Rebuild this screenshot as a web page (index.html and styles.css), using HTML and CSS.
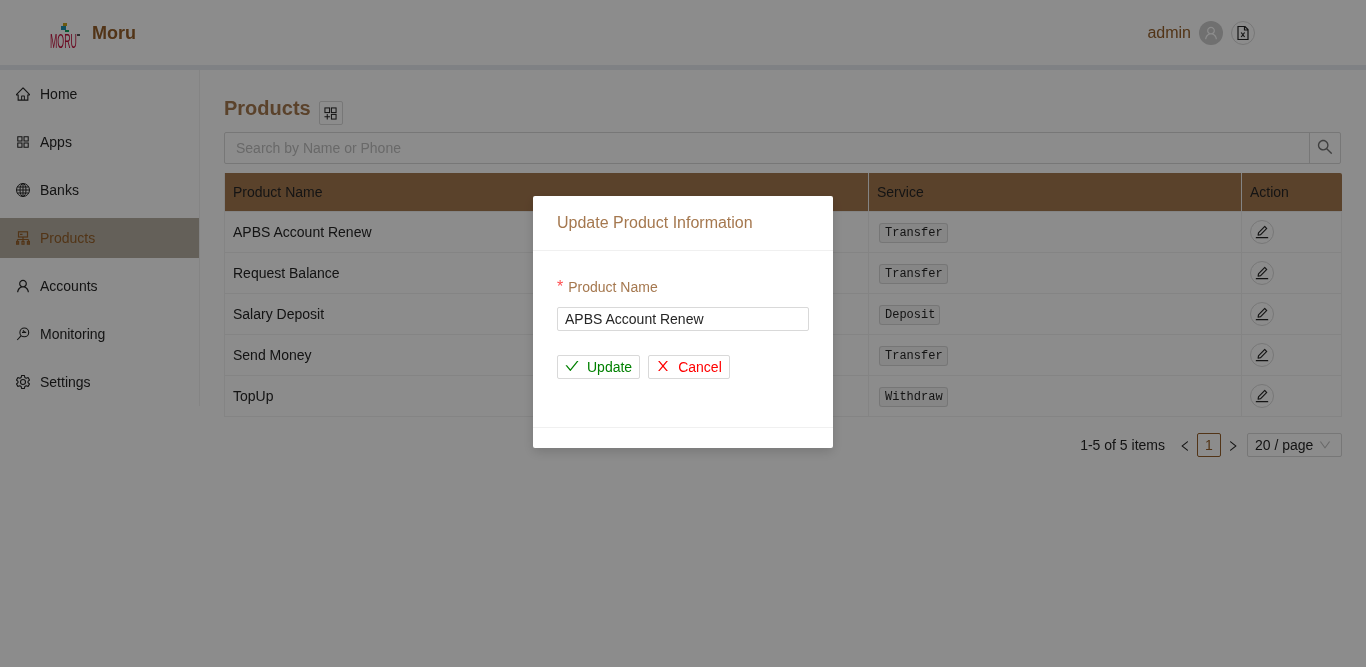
FILE: index.html
```html
<!DOCTYPE html>
<html lang="en">
<head>
    <meta charset="UTF-8">
    <meta name="viewport" content="width=device-width, initial-scale=1.0">
    <title>Moru - Products</title>
    <link rel="stylesheet" href="styles.css">
</head>
<body>
    <svg class="sprite" xmlns="http://www.w3.org/2000/svg">
        <symbol id="i-home" viewBox="64 64 896 896"><path d="M946.5 505L560.1 118.8l-25.9-25.9a31.5 31.5 0 0 0-44.4 0L77.5 505a63.9 63.9 0 0 0-18.8 46c.4 35.2 29.7 63.3 64.9 63.3h42.5V940h691.8V614.3h43.4c17.1 0 33.2-6.7 45.3-18.8a63.6 63.6 0 0 0 18.7-45.3c0-17-6.7-33.1-18.8-45.2zM568 868H456V664h112v204zm217.9-325.7V868H632V640c0-22.1-17.9-40-40-40H432c-22.1 0-40 17.9-40 40v228H238.1V542.3h-96l370-369.7 23.1 23.1L882 542.3h-96.1z"/></symbol>
        <symbol id="i-apps" viewBox="64 64 896 896"><path d="M464 144H160c-8.8 0-16 7.2-16 16v304c0 8.8 7.2 16 16 16h304c8.8 0 16-7.2 16-16V160c0-8.8-7.2-16-16-16zm-52 268H212V212h200v200zm452-268H560c-8.8 0-16 7.2-16 16v304c0 8.8 7.2 16 16 16h304c8.8 0 16-7.2 16-16V160c0-8.8-7.2-16-16-16zm-52 268H612V212h200v200zM464 544H160c-8.8 0-16 7.2-16 16v304c0 8.8 7.2 16 16 16h304c8.8 0 16-7.2 16-16V560c0-8.8-7.2-16-16-16zm-52 268H212V612h200v200zm452-268H560c-8.8 0-16 7.2-16 16v304c0 8.8 7.2 16 16 16h304c8.8 0 16-7.2 16-16V560c0-8.8-7.2-16-16-16zm-52 268H612V612h200v200z"/></symbol>
        <symbol id="i-globe" viewBox="1 1 14 14"><g fill="none" stroke="currentColor" stroke-width="1"><circle cx="8" cy="8" r="6.5"/><ellipse cx="8" cy="8" rx="3" ry="6.5"/><path d="M8 1.5v13M2.2 5h11.6M2.2 11h11.6M1.5 8h13"/></g></symbol>
        <symbol id="i-cluster" viewBox="1 1 14 14"><g fill="none" stroke="currentColor" stroke-width="1.2"><rect x="3.5" y="1.8" width="9" height="5.2"/><path d="M5 4.4h2.5M8 7v2.5M2.5 9.5h11M2.5 9.5v2M8 9.5v2M13.5 9.5v2"/><rect x="1.6" y="11.5" width="2" height="2.7"/><rect x="7" y="11.5" width="2" height="2.7"/><rect x="12.4" y="11.5" width="2" height="2.7"/></g></symbol>
        <symbol id="i-user" viewBox="64 64 896 896"><path d="M858.5 763.6a374 374 0 0 0-80.6-119.5 375.63 375.63 0 0 0-119.5-80.6c-.4-.2-.8-.3-1.2-.5C719.5 518 760 444.7 760 362c0-137-111-248-248-248S264 225 264 362c0 82.7 40.5 156 102.8 201.1-.4.2-.8.3-1.2.5-44.8 18.9-85 46-119.5 80.6a375.63 375.63 0 0 0-80.6 119.5A371.7 371.7 0 0 0 136 901.8a8 8 0 0 0 8 8.2h60c4.4 0 7.9-3.5 8-7.8 2-77.2 33-149.5 87.8-204.3 56.7-56.7 132-87.9 212.2-87.9s155.5 31.2 212.2 87.9C779 752.7 810 825 812 902.2c.1 4.4 3.6 7.8 8 7.8h60a8 8 0 0 0 8-8.2c-1-47.8-10.9-94.3-29.5-138.2zM512 534c-45.9 0-89.1-17.9-121.6-50.4S340 407.9 340 362c0-45.9 17.9-89.1 50.4-121.6S466.1 190 512 190s89.1 17.9 121.6 50.4S684 316.1 684 362c0 45.9-17.9 89.1-50.4 121.6S557.9 534 512 534z"/></symbol>
        <symbol id="i-monitor" viewBox="0 0 14 14"><g fill="none" stroke="currentColor" stroke-width="1.1"><circle cx="8.3" cy="5.4" r="4.4"/><path d="M5.2 8.6L1.2 13M6 5.4h4.2M7 3.4l2 2"/></g></symbol>
        <symbol id="i-gear" viewBox="1 1 14 14"><g fill="none" stroke="currentColor" stroke-width="1.1"><circle cx="8" cy="8" r="2.5"/><path d="M6.6 1.5h2.8l.4 1.9 1.4.8 1.9-.6 1.4 2.4-1.5 1.3v1.4l1.5 1.3-1.4 2.4-1.9-.6-1.4.8-.4 1.9H6.6l-.4-1.9-1.4-.8-1.9.6-1.4-2.4 1.5-1.3V7.3L1.5 6l1.4-2.4 1.9.6 1.4-.8z" stroke-linejoin="round"/></g></symbol>
        <symbol id="i-add" viewBox="1 1 14 14"><g fill="none" stroke="currentColor" stroke-width="1.1"><rect x="2" y="2" width="5" height="5"/><rect x="9" y="2" width="5" height="5"/><rect x="9" y="9" width="5" height="5"/><path d="M1.5 11.5h6M4.5 8.5v6"/></g></symbol>
        <symbol id="i-file" viewBox="0 0 16 16"><g fill="none" stroke="currentColor" stroke-width="1.2"><path d="M3 1.5h7l3 3v10H3zM9.5 1.5v3.5H13"/><path d="M6.2 7.5l3.4 4.5M9.6 7.5L6.2 12"/></g></symbol>
        <symbol id="i-search" viewBox="64 64 896 896"><path d="M909.6 854.5L649.9 594.8C690.2 542.7 712 479 712 412c0-80.2-31.3-155.4-87.9-212.1-56.6-56.7-132-87.9-212.1-87.9s-155.5 31.3-212.1 87.9C143.2 256.5 112 331.8 112 412c0 80.1 31.3 155.5 87.9 212.1C256.5 680.8 331.8 712 412 712c67 0 130.6-21.8 182.7-62l259.7 259.6a8.2 8.2 0 0 0 11.6 0l43.6-43.5a8.2 8.2 0 0 0 0-11.6zM570.4 570.4C528 612.7 471.8 636 412 636s-116-23.3-158.4-65.6C211.3 528 188 471.8 188 412s23.3-116.1 65.6-158.4C296 211.3 352.2 188 412 188s116.1 23.2 158.4 65.6S636 352.2 636 412s-23.3 116.1-65.6 158.4z"/></symbol>
        <symbol id="i-edit" viewBox="64 64 896 896"><path d="M257.7 752c2 0 4-.2 6-.5L431.9 722c2-.4 3.9-1.3 5.3-2.8l423.9-423.9a9.96 9.96 0 0 0 0-14.1L694.9 114.9c-1.9-1.9-4.4-2.9-7.1-2.9s-5.2 1-7.1 2.9L256.8 538.8c-1.5 1.5-2.4 3.3-2.8 5.3l-29.5 168.2a33.5 33.5 0 0 0 9.4 29.8c6.6 6.4 14.9 9.9 23.8 9.9zm67.4-174.4L687.8 215l73.3 73.3-362.7 362.6-88.9 15.7 15.6-89zM880 836H144c-17.7 0-32 14.3-32 32v36c0 4.4 3.6 8 8 8h784c4.4 0 8-3.6 8-8v-36c0-17.7-14.3-32-32-32z"/></symbol>
        <symbol id="i-check" viewBox="64 64 896 896"><path d="M912 190h-69.9c-9.8 0-19.1 4.5-25.1 12.2L404.7 724.5 207 474a32 32 0 0 0-25.1-12.2H112c-6.7 0-10.4 7.7-6.3 12.9l273.9 347c12.8 16.2 37.4 16.2 50.3 0l488.4-618.9c4.1-5.1.4-12.8-6.3-12.8z"/></symbol>
        <symbol id="i-close" viewBox="64 64 896 896"><path d="M563.8 512l262.5-312.9c4.4-5.2.7-13.1-6.1-13.1h-79.8c-4.7 0-9.2 2.1-12.3 5.7L511.6 449.8 295.1 191.7c-3-3.6-7.5-5.7-12.3-5.7H203c-6.8 0-10.5 7.9-6.1 13.1L459.4 512 196.9 824.9A7.95 7.95 0 0 0 203 838h79.8c4.7 0 9.2-2.1 12.3-5.7l216.5-258.1 216.5 258.1c3 3.6 7.5 5.7 12.3 5.7h79.8c6.8 0 10.5-7.9 6.1-13.1L563.8 512z"/></symbol>
        <symbol id="i-left" viewBox="64 64 896 896"><path d="M724 218.3V141c0-6.7-7.7-10.4-12.9-6.3L260.3 486.8a31.86 31.86 0 0 0 0 50.3l450.8 352.1c5.3 4.1 12.9.4 12.9-6.3v-77.3c0-4.9-2.3-9.6-6.1-12.6l-360-281 360-281.1c3.8-3 6.1-7.7 6.1-12.6z"/></symbol>
        <symbol id="i-right" viewBox="64 64 896 896"><path d="M765.7 486.8L314.9 134.7A7.97 7.97 0 0 0 302 141v77.3c0 4.9 2.3 9.6 6.1 12.6l360 281.1-360 281.1c-3.9 3-6.1 7.7-6.1 12.6V883c0 6.7 7.7 10.4 12.9 6.3l450.8-352.1a31.96 31.96 0 0 0 0-50.4z"/></symbol>
        <symbol id="i-down" viewBox="64 64 896 896"><path d="M884 256h-75c-5.1 0-9.9 2.5-12.9 6.6L512 654.2 227.9 262.6c-3-4.1-7.8-6.6-12.9-6.6h-75c-6.5 0-10.3 7.4-6.5 12.7l352.6 486.1c12.8 17.6 39 17.6 51.7 0l352.6-486.1c3.9-5.3.1-12.7-6.4-12.7z"/></symbol>
    </svg>

    <header class="topbar">
        <div class="brand">
            <div class="logo">
                <div class="logo-mark">
                    <span class="sq sq-yellow"></span>
                    <span class="sq sq-blue"></span>
                    <span class="sq sq-green"></span>
                </div>
                <div class="logo-row">
                    <span class="logo-word">MORU</span>
                    <span class="logo-tm"></span>
                </div>
            </div>
            <span class="brand-name">Moru</span>
        </div>
        <div class="user-box">
            <span class="user-name">admin</span>
            <span class="avatar"><svg class="icon"><use href="#i-user"/></svg></span>
            <span class="circle-btn file-btn"><svg class="icon"><use href="#i-file"/></svg></span>
        </div>
    </header>

    <div class="layout">
        <nav class="sidebar">
            <a class="menu-item"><svg class="icon"><use href="#i-home"/></svg>Home</a>
            <a class="menu-item"><svg class="icon"><use href="#i-apps"/></svg>Apps</a>
            <a class="menu-item"><svg class="icon"><use href="#i-globe"/></svg>Banks</a>
            <a class="menu-item active"><svg class="icon"><use href="#i-cluster"/></svg>Products</a>
            <a class="menu-item"><svg class="icon"><use href="#i-user"/></svg>Accounts</a>
            <a class="menu-item"><svg class="icon"><use href="#i-monitor"/></svg>Monitoring</a>
            <a class="menu-item"><svg class="icon"><use href="#i-gear"/></svg>Settings</a>
        </nav>

        <main class="content">
            <div class="title-row">
                <h2>Products</h2>
                <span class="add-btn"><svg class="icon"><use href="#i-add"/></svg></span>
            </div>

            <div class="search-box">
                <input type="text" placeholder="Search by Name or Phone">
                <span class="search-btn"><svg class="icon"><use href="#i-search"/></svg></span>
            </div>

            <table class="product-table">
                <colgroup>
                    <col class="col-name">
                    <col class="col-service">
                    <col class="col-action">
                </colgroup>
                <thead>
                    <tr><th>Product Name</th><th>Service</th><th>Action</th></tr>
                </thead>
                <tbody>
                    <tr>
                        <td>APBS Account Renew</td>
                        <td><code>Transfer</code></td>
                        <td><span class="circle-btn"><svg class="icon"><use href="#i-edit"/></svg></span></td>
                    </tr>
                    <tr>
                        <td>Request Balance</td>
                        <td><code>Transfer</code></td>
                        <td><span class="circle-btn"><svg class="icon"><use href="#i-edit"/></svg></span></td>
                    </tr>
                    <tr>
                        <td>Salary Deposit</td>
                        <td><code>Deposit</code></td>
                        <td><span class="circle-btn"><svg class="icon"><use href="#i-edit"/></svg></span></td>
                    </tr>
                    <tr>
                        <td>Send Money</td>
                        <td><code>Transfer</code></td>
                        <td><span class="circle-btn"><svg class="icon"><use href="#i-edit"/></svg></span></td>
                    </tr>
                    <tr>
                        <td>TopUp</td>
                        <td><code>Withdraw</code></td>
                        <td><span class="circle-btn"><svg class="icon"><use href="#i-edit"/></svg></span></td>
                    </tr>
                </tbody>
            </table>

            <div class="pagination">
                <span class="total">1-5 of 5 items</span>
                <svg class="icon page-arrow"><use href="#i-left"/></svg>
                <span class="page-num">1</span>
                <svg class="icon page-arrow"><use href="#i-right"/></svg>
                <span class="page-size">20 / page <svg class="icon"><use href="#i-down"/></svg></span>
            </div>
        </main>
    </div>

    <div class="mask">
        <div class="modal">
            <div class="modal-header">Update Product Information</div>
            <div class="modal-body">
                <label for="productName"><span class="required">*</span>Product Name</label>
                <input type="text" id="productName" value="APBS Account Renew">
                <div class="modal-actions">
                    <button class="btn btn-update"><svg class="icon"><use href="#i-check"/></svg>Update</button>
                    <button class="btn btn-cancel"><svg class="icon"><use href="#i-close"/></svg>Cancel</button>
                </div>
            </div>
            <div class="modal-footer"></div>
        </div>
    </div>
</body>
</html>
```

FILE: styles.css
```css
* {
    box-sizing: border-box;
}

body {
    font-family: "Liberation Sans", Arial, sans-serif;
    font-size: 14px;
    line-height: 22px;
    color: #262626;
    background-color: #ffffff;
    margin: 0;
    height: 667px;
    overflow: hidden;
}

.sprite {
    display: none;
}

.icon {
    width: 14px;
    height: 14px;
    fill: currentColor;
    flex: none;
}

/* top bar */
.topbar {
    height: 70px;
    border-bottom: 5px solid #e8ecf0;
    display: flex;
    justify-content: space-between;
    align-items: center;
    padding: 0 111px 0 50px;
    will-change: transform;
}

.brand {
    display: flex;
    align-items: center;
    gap: 12px;
}

.logo {
    width: 30px;
    height: 25px;
    margin-top: 5px;
    display: flex;
    flex-direction: column;
    align-items: flex-start;
}

.logo-mark {
    width: 20px;
    height: 10px;
    margin-left: 11px;
    position: relative;
    flex: none;
}

.sq {
    position: absolute;
    display: block;
}

.sq-yellow {
    left: 2px;
    top: 0;
    width: 4px;
    height: 3px;
    background-color: #c9a21b;
}

.sq-blue {
    left: 0;
    top: 3px;
    width: 5px;
    height: 4px;
    background-color: #1f93b0;
}

.sq-green {
    left: 4px;
    top: 7px;
    width: 4px;
    height: 2px;
    background-color: #12a55f;
}

.logo-row {
    display: flex;
    align-items: flex-start;
    width: 30px;
    height: 15px;
}

.logo-word {
    font-size: 21px;
    line-height: 15px;
    color: #c2103c;
    display: block;
    width: 27px;
    flex: none;
    transform: scaleX(0.42);
    transform-origin: left center;
}

.logo-tm {
    width: 3px;
    height: 2px;
    margin-top: 1px;
    background-color: #555555;
    flex: none;
}

.brand-name {
    font-size: 18px;
    font-weight: bold;
    color: #96602a;
}

.user-box {
    display: flex;
    align-items: center;
    font-size: 16px;
    color: #96602a;
}

.user-name {
    margin-right: 8px;
}

.avatar {
    width: 24px;
    height: 24px;
    border-radius: 50%;
    background-color: #cccccc;
    color: #ffffff;
    display: flex;
    align-items: center;
    justify-content: center;
    margin-right: 8px;
}

.circle-btn {
    width: 24px;
    height: 24px;
    border: 1px solid #d9d9d9;
    border-radius: 50%;
    background-color: #ffffff;
    color: #262626;
    display: flex;
    align-items: center;
    justify-content: center;
}

.file-btn .icon {
    width: 16px;
    height: 16px;
}

/* sidebar */
.layout {
    display: flex;
    align-items: flex-start;
    will-change: transform;
}

.sidebar {
    width: 200px;
    flex: none;
    border-right: 1px solid #f0f0f0;
    padding: 4px 0;
}

.menu-item {
    height: 40px;
    margin-bottom: 8px;
    padding-left: 16px;
    display: flex;
    align-items: center;
    gap: 10px;
    color: #262626;
}

.menu-item:last-child {
    margin-bottom: 0;
}

.menu-item.active {
    background-color: #b6b0a2;
    color: #96602a;
}

/* content */
.content {
    flex: 1;
    padding: 26px 24px 0;
    min-width: 0;
}

.title-row {
    height: 36px;
    display: flex;
    align-items: flex-start;
    gap: 8px;
}

.title-row h2 {
    margin: 0;
    font-size: 20px;
    line-height: 24px;
    font-weight: bold;
    color: #a5784f;
}

.add-btn {
    width: 24px;
    height: 24px;
    margin-top: 5px;
    border: 1px solid #d9d9d9;
    border-radius: 2px;
    color: #262626;
    display: flex;
    align-items: center;
    justify-content: center;
}

.add-btn .icon {
    width: 13px;
    height: 13px;
}

.search-box {
    display: flex;
    height: 32px;
    width: 1117px;
    border: 1px solid #d9d9d9;
    border-radius: 2px;
    margin-bottom: 9px;
}

.search-box input {
    flex: 1;
    border: none;
    outline: none;
    background: transparent;
    padding: 0 11px;
    font-family: inherit;
    font-size: 14px;
}

.search-box input::placeholder {
    color: #bfbfbf;
}

.search-btn {
    width: 31px;
    border-left: 1px solid #d9d9d9;
    color: #737373;
    display: flex;
    align-items: center;
    justify-content: center;
}

.search-btn .icon {
    width: 16px;
    height: 16px;
    margin-top: -3px;
}

/* table */
.product-table {
    width: 1118px;
    table-layout: fixed;
    border-collapse: separate;
    border-spacing: 0;
    border-left: 1px solid #f0f0f0;
}

.col-name {
    width: 644px;
}

.col-service {
    width: 373px;
}

.product-table th {
    height: 39px;
    padding: 0 8px;
    background-color: #a5784f;
    background-clip: padding-box;
    color: #262626;
    font-weight: normal;
    text-align: left;
    border-right: 1px solid #f0f0f0;
    border-bottom: 1px solid #f0f0f0;
}

.product-table th:last-child {
    border-right: none;
    border-top-right-radius: 2px;
}

.product-table td {
    height: 41px;
    padding: 0 8px;
    border-right: 1px solid #f0f0f0;
    border-bottom: 1px solid #f0f0f0;
}

code {
    display: inline-block;
    vertical-align: middle;
    font-family: "Liberation Mono", monospace;
    font-size: 12px;
    line-height: 17px;
    padding: 1px 4px 0 5px;
    background-color: rgba(150, 150, 150, 0.1);
    border: 1px solid rgba(100, 100, 100, 0.2);
    border-radius: 3px;
    margin-left: 2px;
}

/* pagination */
.pagination {
    display: flex;
    justify-content: flex-end;
    align-items: center;
    width: 1118px;
    height: 24px;
    margin-top: 16px;
}

.total {
    margin-right: 8px;
}

.page-arrow {
    width: 12px;
    height: 12px;
    margin: 1px 6px 0;
}

.page-num {
    width: 24px;
    height: 24px;
    border: 1px solid #96602a;
    border-radius: 2px;
    color: #96602a;
    text-align: center;
}

.page-size {
    width: 95px;
    height: 24px;
    margin-left: 2px;
    padding: 0 7px;
    border: 1px solid #d9d9d9;
    border-radius: 2px;
    display: flex;
    align-items: center;
    white-space: pre;
}

.page-size .icon {
    width: 12px;
    height: 12px;
    color: #bfbfbf;
    margin-left: 2px;
}

/* modal */
.mask {
    position: fixed;
    top: 0;
    left: 0;
    right: 0;
    bottom: 0;
    background-color: rgba(0, 0, 0, 0.45);
    display: flex;
    justify-content: center;
    align-items: flex-start;
    padding-top: 196px;
}

.modal {
    width: 300px;
    height: 252px;
    background-color: #ffffff;
    border-radius: 2px;
    box-shadow: 0 4px 12px rgba(0, 0, 0, 0.15);
    display: flex;
    flex-direction: column;
}

.modal-header {
    height: 55px;
    padding: 16px 24px;
    font-size: 16px;
    color: #a5784f;
    border-bottom: 1px solid #f0f0f0;
}

.modal-body {
    flex: 1;
    padding: 25px 24px 0;
    display: flex;
    flex-direction: column;
    align-items: flex-start;
}

.modal-body label {
    color: #a5784f;
    height: 22px;
    margin-bottom: 9px;
}

.required {
    display: inline-block;
    color: #ff4d4f;
    font-size: 16px;
    margin-right: 5px;
}

.modal-body input {
    width: 252px;
    height: 24px;
    padding: 0 7px;
    border: 1px solid #d9d9d9;
    border-radius: 2px;
    font-family: inherit;
    font-size: 14px;
    color: #262626;
    outline: none;
}

.modal-actions {
    display: flex;
    gap: 8px;
    margin-top: 24px;
}

.btn {
    height: 24px;
    padding: 0 7px;
    background-color: #ffffff;
    border: 1px solid #d9d9d9;
    border-radius: 2px;
    font-family: inherit;
    font-size: 14px;
    display: flex;
    align-items: center;
    gap: 8px;
}

.btn .icon {
    margin-top: -2px;
}

.btn-update {
    color: #008000;
}

.btn-cancel {
    color: #ff0000;
}

.modal-footer {
    height: 21px;
    border-top: 1px solid #f0f0f0;
}
```
